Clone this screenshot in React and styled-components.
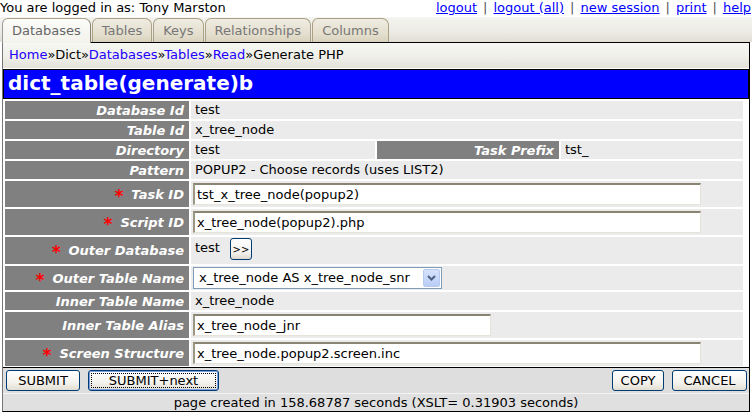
import React from 'react';
import styled, { createGlobalStyle } from 'styled-components';

const GlobalStyle = createGlobalStyle`
  body {
    margin: 0;
    background: #fff;
    font-family: "DejaVu Sans", Verdana, sans-serif;
    font-size: 13px;
    color: #000;
  }
`;

const links = ['logout', 'logout (all)', 'new session', 'print', 'help'];
const tabs = ['Databases', 'Tables', 'Keys', 'Relationships', 'Columns'];
const crumbs = [
  { text: 'Home', link: true },
  { text: 'Dict' },
  { text: 'Databases', link: true },
  { text: 'Tables', link: true },
  { text: 'Read', link: true },
  { text: 'Generate PHP' },
];

const App = () => {
  return (
    <Page>
      <GlobalStyle />
      <TopLine>
        <span>You are logged in as: Tony Marston</span>
        <TopLinks>
          {links.map((l, i) => (
            <React.Fragment key={l}>
              {i > 0 && <Sep>|</Sep>}
              <a href="#">{l}</a>
            </React.Fragment>
          ))}
        </TopLinks>
      </TopLine>

      <TabBar>
        {tabs.map((t, i) => (
          <Tab key={t} $active={i === 0}>{t}</Tab>
        ))}
      </TabBar>

      <Main>
        <Breadcrumb>
          {crumbs.map((c, i) => (
            <React.Fragment key={c.text}>
              {i > 0 && '»'}
              {c.link ? <a href="#">{c.text}</a> : <span>{c.text}</span>}
            </React.Fragment>
          ))}
        </Breadcrumb>

        <Title>dict_table(generate)b</Title>

        <Form>
          <Label>Database Id</Label>
          <Value $span>test</Value>

          <Label>Table Id</Label>
          <Value $span>x_tree_node</Value>

          <Label>Directory</Label>
          <Value>test</Value>
          <Label>Task Prefix</Label>
          <Value>tst_</Value>

          <Label>Pattern</Label>
          <Value $span>POPUP2 - Choose records (uses LIST2)</Value>

          <Label $tall><Req>*</Req>Task ID</Label>
          <Value $span><Input $w={508} defaultValue="tst_x_tree_node(popup2)" /></Value>

          <Label $tall><Req>*</Req>Script ID</Label>
          <Value $span><Input $w={508} defaultValue="x_tree_node(popup2).php" /></Value>

          <Label $h={27}><Req>*</Req>Outer Database</Label>
          <Value $span $top>
            <OuterText>test</OuterText>
            <SmallButton>&gt;&gt;</SmallButton>
          </Value>

          <Label $h={24}><Req>*</Req>Outer Table Name</Label>
          <Value $span>
            <Select>
              <span>x_tree_node AS x_tree_node_snr</span>
              <SelectArrow>
                <svg width="9" height="6" viewBox="0 0 9 6">
                  <polyline points="1,1 4.5,4.5 8,1" fill="none" stroke="#4d6185" strokeWidth="2" />
                </svg>
              </SelectArrow>
            </Select>
          </Value>

          <Label>Inner Table Name</Label>
          <Value $span>x_tree_node</Value>

          <Label $tall>Inner Table Alias</Label>
          <Value $span><Input $w={298} defaultValue="x_tree_node_jnr" /></Value>

          <Label $tall><Req>*</Req>Screen Structure</Label>
          <Value $span><Input $w={508} defaultValue="x_tree_node.popup2.screen.inc" /></Value>
        </Form>

        <ButtonBar>
          <ButtonGroup>
            <Button $w={74}>SUBMIT</Button>
            <Button $w={131} $default>SUBMIT+next</Button>
          </ButtonGroup>
          <ButtonGroup>
            <Button $w={52}>COPY</Button>
            <Button $w={75}>CANCEL</Button>
          </ButtonGroup>
        </ButtonBar>

        <Footer>page created in 158.68787 seconds (XSLT= 0.31903 seconds)</Footer>
      </Main>
    </Page>
  );
};

const Page = styled.div`
  width: 752px;
  a { color: #0000ff; }
`;

const TopLine = styled.div`
  display: flex;
  justify-content: space-between;
  height: 17px;
  line-height: 16px;
  padding-right: 1px;
`;

const TopLinks = styled.div`
  display: flex;
  gap: 6px;
`;

const Sep = styled.span`
  color: #555;
`;

const TabBar = styled.div`
  display: flex;
  align-items: flex-end;
  gap: 1px;
  height: 25px;
  padding-left: 2px;
  background: linear-gradient(#f4f4f0, #ecebe4 60%, #e0ded4);
`;

const Tab = styled.div`
  position: relative;
  z-index: 1;
  height: ${p => (p.$active ? 25 : 24)}px;
  line-height: 24px;
  padding: 0 9px;
  border: 1px solid #aba184;
  border-bottom: none;
  border-radius: 6px 7px 0 0;
  color: ${p => (p.$active ? '#666' : '#777')};
  background: ${p => (p.$active
    ? 'linear-gradient(#fbfbf8, #f3f2ec)'
    : 'linear-gradient(#efece2, #e3ddcc 70%, #d8d1bd)')};
  margin-bottom: ${p => (p.$active ? '-1px' : '0')};
  box-sizing: border-box;
  ${p => p.$active && 'border-left-color: #999; border-right-color: #8a8470;'}
`;

const Main = styled.div`
  margin-left: 2px;
  width: 748px;
  box-sizing: border-box;
  border: 1px solid #000;
  border-top: none;
  border-left-color: #777;
`;

const Breadcrumb = styled.div`
  height: 25px;
  line-height: 24px;
  padding-left: 6px;
  border-top: 1px solid #000;
  background: linear-gradient(#f7f7f3, #f0f0ea 50%, #e4e2d9);
  margin-bottom: 1px;

  a { text-decoration: none; color: #2200ff; }
`;

const Title = styled.div`
  height: 28px;
  line-height: 27px;
  border: 1px solid #000;
  background: #0000ff;
  color: #fff;
  font-weight: bold;
  font-size: 20px;
  padding-left: 4px;
`;

const Form = styled.div`
  display: grid;
  grid-template-columns: 184px 184px 182px 182px;
  gap: 2px;
  padding: 2px 2px 1px 2px;
  border-bottom: 1px solid #000;
`;

const Label = styled.div`
  min-height: ${p => (p.$h ? p.$h : p.$tall ? 26 : 18)}px;
  display: flex;
  align-items: center;
  justify-content: flex-end;
  padding-right: 5px;
  background: #808080;
  color: #fff;
  font-weight: bold;
  font-style: italic;
  box-sizing: border-box;
`;

const Req = styled.span`
  color: #ff0000;
  margin-right: 8px;
  font-style: normal;
  font-weight: bold;
  font-size: 17px;
  line-height: 13px;
  padding-top: 4px;
`;

const Value = styled.div`
  grid-column: ${p => (p.$span ? 'span 3' : 'auto')};
  display: flex;
  align-items: ${p => (p.$top ? 'flex-start' : 'center')};
  padding-left: 4px;
  padding-top: ${p => (p.$top ? '1px' : '0')};
  background: #ebebeb;
  line-height: 18px;
  white-space: nowrap;
`;

const Input = styled.input`
  width: ${p => p.$w}px;
  height: 22px;
  box-sizing: border-box;
  margin: 0 0 0 -2px;
  padding: 0 2px;
  font: inherit;
  color: #000;
  background: #fff;
  border-style: solid;
  border-width: 2px 1px 1px 2px;
  border-color: #8a8572 #e6e4da #e6e4da #9c9884;
`;

const OuterText = styled.span`
  line-height: 19px;
  margin-right: 10px;
`;

const SmallButton = styled.button`
  width: 22px;
  height: 22px;
  padding: 0;
  font-family: inherit;
  font-size: 10px;
  color: #000;
  border: 1px solid #003c74;
  border-radius: 3px;
  background: linear-gradient(#fff, #f2f1ec 70%, #dcd8cc);
`;

const Select = styled.div`
  display: flex;
  align-items: center;
  justify-content: space-between;
  width: 249px;
  height: 22px;
  box-sizing: border-box;
  margin-left: -2px;
  padding: 1px 1px 1px 5px;
  border: 1px solid #7f9db9;
  background: #fff;
`;

const SelectArrow = styled.span`
  display: flex;
  align-items: center;
  justify-content: center;
  width: 17px;
  height: 18px;
  border-radius: 2px;
  background: linear-gradient(#d6e2fc, #b9cdf6);
  border: 1px solid #b7c9ef;
  box-sizing: border-box;
`;

const ButtonBar = styled.div`
  display: flex;
  justify-content: space-between;
  align-items: center;
  height: 25px;
  padding: 0 2px 0 3px;
  background: #dedede;
  border-bottom: 1px solid #f4f4f4;
`;

const ButtonGroup = styled.div`
  display: flex;
  gap: 8px;
`;

const Button = styled.button`
  width: ${p => p.$w}px;
  height: 21px;
  padding: 0;
  font-family: inherit;
  font-size: 13px;
  color: #000;
  border: 1px solid #003c74;
  border-radius: 3px;
  background: linear-gradient(#fff, #f4f3ee 60%, #e2ded3);
  ${p => p.$default && `
    box-shadow: inset 0 0 0 1px #7a9ee0;
    outline: 1px dotted #000;
    outline-offset: -4px;
  `}
`;

const Footer = styled.div`
  height: 17px;
  line-height: 17px;
  text-align: center;
  background: #e0e0e0;
`;

export default App;
